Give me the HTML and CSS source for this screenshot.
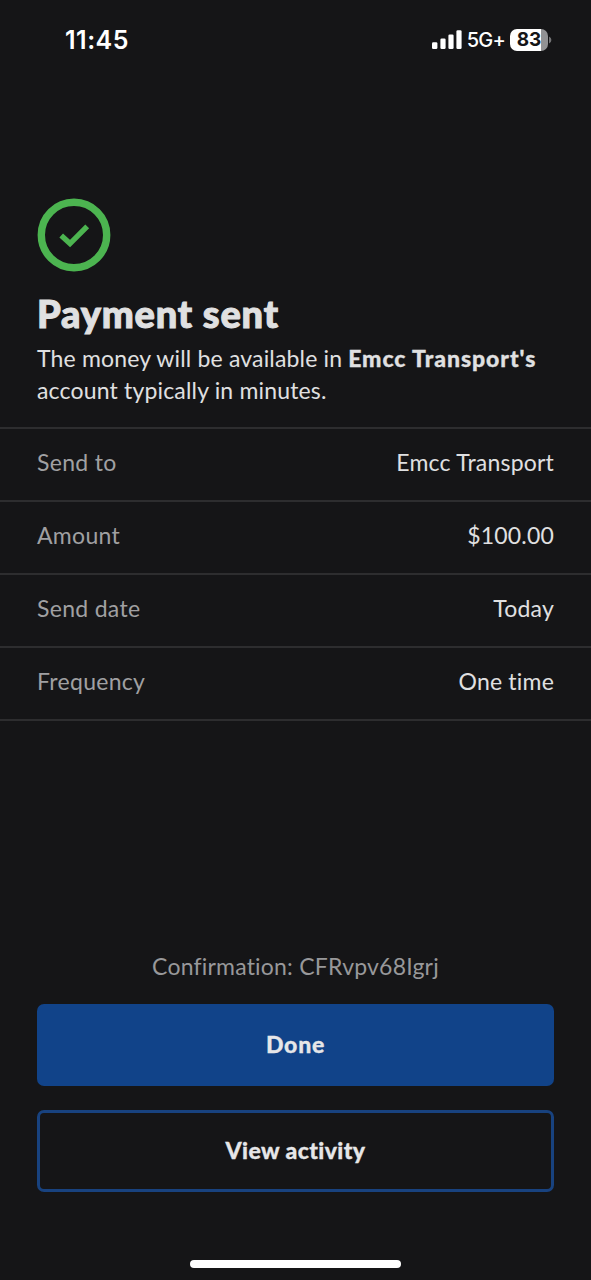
FILE: index.html
```html
<!DOCTYPE html>
<html lang="en">
<head>
<meta charset="utf-8">
<title>Payment sent</title>
<link rel="stylesheet" href="styles.css">
</head>
<body>
<div class="screen">
  <header class="status-bar">
    <span class="time">11:45</span>
    <div class="status-icons">
      <svg class="signal" width="30" height="20" viewBox="0 0 30 20" fill="#fff">
        <rect x="0" y="12.3" width="5.4" height="6.7" rx="1.3"/>
        <rect x="8.4" y="8.5" width="5.2" height="10.5" rx="1.3"/>
        <rect x="16.4" y="4.5" width="5.2" height="14.5" rx="1.3"/>
        <rect x="24.4" y="0.2" width="5.2" height="18.8" rx="1.3"/>
      </svg>
      <span class="network">5G+</span>
      <div class="battery"><span class="battery-level">83</span></div>
      <svg class="battery-cap" width="3" height="8" viewBox="0 0 3 8"><path d="M0 0.5Q2.4 1.5 2.4 4T0 7.5Z" fill="#747476"/></svg>
    </div>
  </header>

  <main>
    <section class="intro">
      <svg class="check" width="74" height="74" viewBox="0 0 74 74" fill="none" stroke="#4cb450">
        <circle cx="37" cy="37" r="32.7" stroke-width="7.4"/>
        <path d="M24.2 37.6L33 45.6L50.2 28.4" stroke-width="5.4"/>
      </svg>
      <h1 class="title">Payment sent</h1>
      <p class="message"><span class="message-lead">The money will be available in</span> <strong class="payee">Emcc Transport's</strong><br><span class="message-end">account typically in minutes.</span></p>
    </section>
    <dl class="details">
      <div class="row"><dt>Send to</dt><dd>Emcc Transport</dd></div>
      <div class="row"><dt>Amount</dt><dd>$100.00</dd></div>
      <div class="row"><dt>Send date</dt><dd>Today</dd></div>
      <div class="row"><dt>Frequency</dt><dd>One time</dd></div>
    </dl>
  </main>

  <footer class="actions">
    <p class="confirmation">Confirmation: CFRvpv68Igrj</p>
    <button class="button primary">Done</button>
    <button class="button secondary">View activity</button>
    <div class="home-indicator"></div>
  </footer>
</div>
</body>
</html>
```
FILE: styles.css
```css
* { box-sizing: border-box; }
body { margin: 0; background: #151517; }
h1, p, dl, dd { margin: 0; }
.screen {
  width: 591px;
  height: 1280px;
  display: flex;
  flex-direction: column;
  overflow: hidden;
  background: #151517;
  color: #e0e0e1;
  font-family: Lato, "Open Sans", sans-serif;
  font-size: 23px;
  font-variant-ligatures: none;
}
.status-bar {
  height: 198px;
  padding: 25px 39px 0 65px;
  display: flex;
  justify-content: space-between;
  align-items: flex-start;
  color: #fff;
  font-family: Inter, sans-serif;
}
.time { font-size: 25px; line-height: 30px; font-weight: 600; letter-spacing: 0.5px; }
.status-icons { display: flex; align-items: center; height: 30px; }
.network { margin-left: 5px; font-size: 20px; line-height: 32px; font-weight: 500; letter-spacing: -0.8px; }
.battery {
  width: 38px;
  height: 22px;
  margin-left: 5px;
  border-radius: 7px;
  background: linear-gradient(90deg, #fff 31px, #929294 31px);
  color: #151517;
  text-align: center;
}
.battery-level { display: block; font-size: 19px; line-height: 22px; font-weight: 700; }
.battery-cap { margin-left: 1px; }
.intro { height: 229px; padding: 0 37px; display: flex; flex-direction: column; }
.check { display: block; }
.title {
  margin-top: 18px;
  font-size: 38px;
  line-height: 46px;
  font-weight: 900;
  letter-spacing: 0.8px;
  white-space: nowrap;
  -webkit-text-stroke: 1px currentColor;
}
.message { margin-top: 6px; line-height: 32px; white-space: nowrap; }
.message-lead, .message-end { letter-spacing: 0.17px; }
.payee { font-weight: 900; letter-spacing: 0.95px; -webkit-text-stroke: 0.3px currentColor; }
.details { border-top: 2px solid #2d2d2f; }
.row {
  height: 73px;
  padding: 0 37px 6px;
  display: flex;
  justify-content: space-between;
  align-items: center;
  border-bottom: 2px solid #2d2d2f;
  letter-spacing: 0.2px;
}
.row dt { color: #a0a0a2; letter-spacing: 0.3px; }
.actions { margin-top: auto; height: 328px; padding: 0 37px; display: flex; flex-direction: column; }
.confirmation { height: 52px; line-height: 29px; text-align: center; color: #98989a; letter-spacing: 0.2px; }
.button {
  height: 82px;
  flex: none;
  padding: 0 0 2px;
  border: 0;
  border-radius: 7px;
  color: #e6e6e8;
  font: 900 23px Lato, sans-serif;
  font-variant-ligatures: none;
  letter-spacing: 0.4px;
  -webkit-text-stroke: 0.3px currentColor;
}
.primary { background: #114389; letter-spacing: 0.8px; }
.secondary { margin-top: 24px; background: transparent; border: 3px solid #18427f; }
.home-indicator { width: 211px; height: 8px; margin: 68px auto 0; border-radius: 4px; background: #fff; }
```
